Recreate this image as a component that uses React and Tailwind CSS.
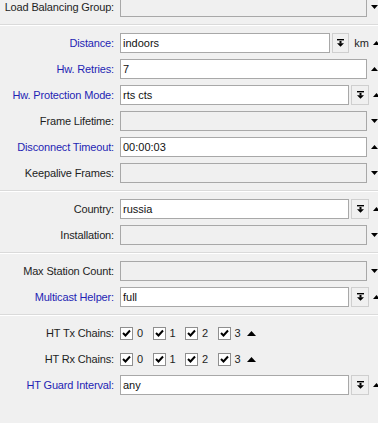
import React from "react";

const font = { fontFamily: '"Liberation Sans", Arial, sans-serif' };

const UpTri = () => (
  <svg width="7" height="4" viewBox="0 0 7 4" className="block">
    <polygon points="0,4 7,4 3.5,0" fill="#000" />
  </svg>
);

const DownTri = () => (
  <svg width="7" height="4" viewBox="0 0 7 4" className="block">
    <polygon points="0,0 7,0 3.5,4" fill="#000" />
  </svg>
);

const DropIcon = () => (
  <svg width="7" height="8" viewBox="0 0 7 8" className="block">
    <rect x="0" y="0" width="7" height="1.4" fill="#000" />
    <rect x="2.5" y="2" width="2" height="2.5" fill="#000" />
    <polygon points="0,4.2 7,4.2 3.5,7.8" fill="#000" />
  </svg>
);

const Check = () => (
  <span className="w-[13px] h-[13px] bg-white border border-[#8f8f8f] flex items-center justify-center">
    <svg width="9" height="8" viewBox="0 0 9 8">
      <polyline points="1,4 3.5,6.5 8,1.5" fill="none" stroke="#000" strokeWidth="2" />
    </svg>
  </span>
);

const Label = ({ text, blue }) => (
  <div
    className={`w-[115px] shrink-0 text-right pr-px whitespace-nowrap tracking-[-0.15px] ${blue ? "text-[#1f1fb4]" : "text-[#1e1e1e]"}`}
  >
    {text}
  </div>
);

const Box = ({ value, disabled, className = "" }) => (
  <div
    className={`h-5 border border-[#a8a8a8] flex items-center pl-[2px] text-[#111] ${disabled ? "bg-[#f0f0f0]" : "bg-white"} ${className}`}
  >
    {value}
  </div>
);

const DropBtn = ({ className = "" }) => (
  <div className={`h-5 border border-[#cfcfcf] bg-[#f0f0f0] flex items-center justify-center ${className}`}>
    <DropIcon />
  </div>
);

const Row = ({ label, blue, arrow, children }) => (
  <div className="flex items-center h-5">
    <Label text={label} blue={blue} />
    <div className="ml-[5px] w-[249px] flex items-center">{children}</div>
    <div className="ml-[4px]">{arrow === "up" ? <UpTri /> : arrow === "down" ? <DownTri /> : null}</div>
  </div>
);

const Sep = () => <div className="h-[2px] border-t border-[#dadada] border-b border-b-white my-[7px]" />;

const Chains = ({ label }) => (
  <div className="flex items-center h-5">
    <Label text={label} />
    <div className="ml-[5px] flex items-center">
      {["0", "1", "2", "3"].map((n) => (
        <div key={n} className="flex items-center w-[32.5px]">
          <Check />
          <span className="ml-[4px] text-[#1e1e1e]">{n}</span>
        </div>
      ))}
      <svg width="9" height="5" viewBox="0 0 9 5" className="ml-[-3px]">
        <polygon points="0,5 9,5 4.5,0" fill="#000" />
      </svg>
    </div>
  </div>
);

export default function App() {
  return (
    <div className="w-[378px] h-[423px] bg-[#f0f0f0] overflow-hidden text-[11px]" style={font}>
      <div className="-mt-[3px] flex flex-col">
        <Row label="Load Balancing Group:" arrow="down">
          <Box disabled className="w-full" />
        </Row>
        <Sep />
        <div className="flex flex-col gap-[6px]">
          <Row label="Distance:" blue arrow="up">
            <Box value="indoors" className="w-[211px]" />
            <DropBtn className="w-[17px] ml-[2px]" />
            <span className="ml-[5px] text-[#1e1e1e]">km</span>
          </Row>
          <Row label="Hw. Retries:" blue arrow="up">
            <Box value="7" className="w-full" />
          </Row>
          <Row label="Hw. Protection Mode:" blue arrow="up">
            <Box value="rts cts" className="w-[229px]" />
            <DropBtn className="w-[18px] ml-[2px]" />
          </Row>
          <Row label="Frame Lifetime:" arrow="down">
            <Box disabled className="w-full" />
          </Row>
          <Row label="Disconnect Timeout:" blue arrow="up">
            <Box value="00:00:03" className="w-full" />
          </Row>
          <Row label="Keepalive Frames:" arrow="down">
            <Box disabled className="w-full" />
          </Row>
        </div>
        <Sep />
        <div className="flex flex-col gap-[6px]">
          <Row label="Country:" arrow="up">
            <Box value="russia" className="w-[229px]" />
            <DropBtn className="w-[18px] ml-[2px]" />
          </Row>
          <Row label="Installation:" arrow="down">
            <Box disabled className="w-full" />
          </Row>
        </div>
        <Sep />
        <div className="flex flex-col gap-[6px]">
          <Row label="Max Station Count:" arrow="down">
            <Box disabled className="w-full" />
          </Row>
          <Row label="Multicast Helper:" blue arrow="up">
            <Box value="full" className="w-[229px]" />
            <DropBtn className="w-[18px] ml-[2px]" />
          </Row>
        </div>
        <Sep />
        <div className="flex flex-col gap-[6px]">
          <Chains label="HT Tx Chains:" />
          <Chains label="HT Rx Chains:" />
          <Row label="HT Guard Interval:" blue arrow="up">
            <Box value="any" className="w-[229px]" />
            <DropBtn className="w-[18px] ml-[2px]" />
          </Row>
        </div>
      </div>
    </div>
  );
}
